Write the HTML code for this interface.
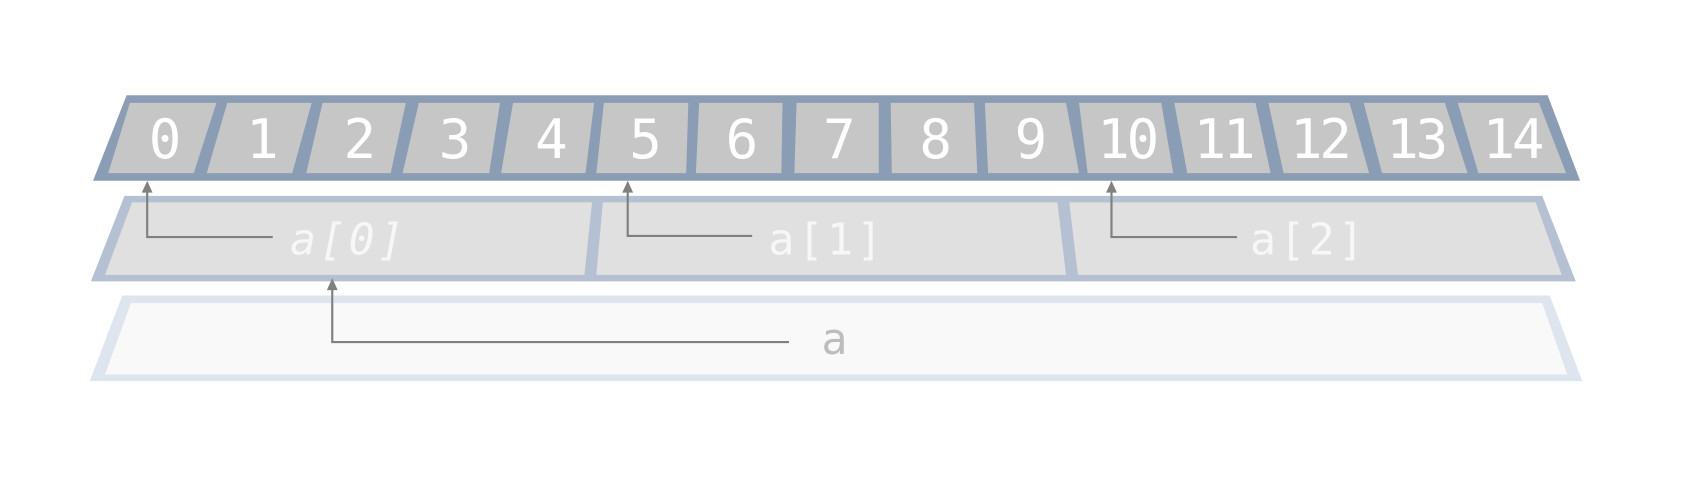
<!DOCTYPE html>
<html><head><style>html,body{margin:0;padding:0;background:#fff;}svg{display:block}</style></head>
<body>
<svg width="1697" height="490" viewBox="0 0 1568 452.7" preserveAspectRatio="none" xmlns="http://www.w3.org/2000/svg">
<rect width="1568" height="453" fill="#fff"/>
<!-- top band -->
<polygon points="117,88 1430,88 1460,167 86,167" fill="#8a9db5"/>
<g fill="#c6c6c6">
<polygon points="120,95 200,95 179,160 100,160"/>
<polygon points="210,95 288,95 270,160 191,160"/>
<polygon points="298,95 375,95 361,160 283,160"/>
<polygon points="387,95 462,95 452,160 372,160"/>
<polygon points="474,95 549,95 541,160 463,160"/>
<polygon points="558,95 636,95 634,160 551,160"/>
<polygon points="646,95 723,95 722,160 643,160"/>
<polygon points="736,95 812,95 812,160 734,160"/>
<polygon points="823,95 900,95 903,160 824,160"/>
<polygon points="910,95 985,95 997,160 913,160"/>
<polygon points="997,95 1073,95 1084,160 1005,160"/>
<polygon points="1085,95 1160,95 1174,160 1097,160"/>
<polygon points="1172,95 1247,95 1265,160 1186,160"/>
<polygon points="1260,95 1335,95 1356,160 1277,160"/>
<polygon points="1347,95 1422,95 1447,160 1366,160"/>
</g>
<g fill="#fff" font-family="DejaVu Sans Mono, monospace" font-size="50" text-anchor="middle" letter-spacing="-3">
<text x="151" y="146">0</text><text x="241" y="146">1</text><text x="331" y="146">2</text>
<text x="419" y="146">3</text><text x="508" y="146">4</text><text x="595" y="146">5</text>
<text x="684" y="146">6</text><text x="774" y="146">7</text><text x="863" y="146">8</text>
<text x="951" y="146">9</text><text x="1041" y="146">10</text><text x="1130" y="146">11</text>
<text x="1219" y="146">12</text><text x="1308" y="146">13</text><text x="1397" y="146">14</text>
</g>
<!-- middle band -->
<polygon points="115,181 1425,181 1456,260 84,260" fill="#b5c1d3"/>
<g fill="#e0e0e0">
<polygon points="122,187 547,187 540,254 97,254"/>
<polygon points="557,187 977,187 985,254 551,254"/>
<polygon points="988,187 1419,187 1443,254 996,254"/>
</g>
<g fill="#f7f7f7" font-family="DejaVu Sans Mono, monospace" font-size="40" letter-spacing="3">
<text x="268" y="235" font-style="italic">a[0]</text>
<text x="710" y="235">a[1]</text>
<text x="1155" y="235">a[2]</text>
</g>
<!-- bottom band -->
<polygon points="113,273 1432,273 1462,352 83,352" fill="#dfe5ef"/>
<polygon points="121,280 1425,280 1448,346 97,346" fill="#f9f9f9"/>
<text x="759" y="327" fill="#bdbdbd" font-family="DejaVu Sans Mono, monospace" font-size="40">a</text>
<!-- arrows -->
<g stroke="#808080" stroke-width="2" fill="none">
<polyline points="136,177 136,219 252,219"/>
<polyline points="580,177 580,218 695,218"/>
<polyline points="1027,177 1027,219 1143,219"/>
<polyline points="307,267 307,316 729,316"/>
</g>
<g fill="#808080">
<polygon points="136,167 131,178 141,178"/>
<polygon points="580,167 575,178 585,178"/>
<polygon points="1027,167 1022,178 1032,178"/>
<polygon points="307,257 302,268 312,268"/>
</g>
</svg>
</body></html>
